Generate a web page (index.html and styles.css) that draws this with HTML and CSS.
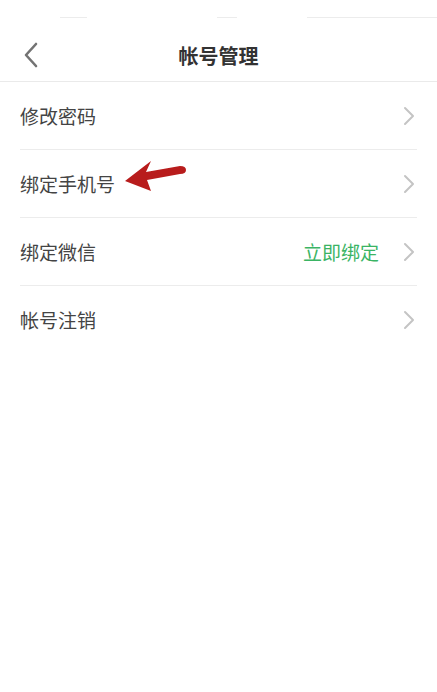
FILE: index.html
```html
<!DOCTYPE html>
<html lang="zh-CN">
<head>
  <meta charset="UTF-8" />
  <meta name="viewport" content="width=device-width, initial-scale=1.0" />
  <title>帐号管理</title>
  <link rel="stylesheet" href="styles.css">
</head>
<body>
  <div class="status">
    <span class="seg seg1"></span>
    <span class="seg seg2"></span>
    <span class="seg seg3"></span>
  </div>

  <div class="header">
    <svg class="back" width="16" height="26" viewBox="0 0 16 26">
      <path d="M13 2 L3 13 L13 24" fill="none" stroke="#737373" stroke-width="2.6" stroke-linecap="round" stroke-linejoin="round" />
    </svg>
    <h1>帐号管理</h1>
  </div>

  <div class="list">
    <div class="row">
      <span class="label">修改密码</span>
      <svg class="chev" width="12" height="20" viewBox="0 0 12 20"><path d="M2 2 L10 10 L2 18" fill="none" stroke="#c4c4c4" stroke-width="2" stroke-linecap="round" stroke-linejoin="round" /></svg>
    </div>
    <div class="row">
      <span class="label">绑定手机号</span>
      <!-- annotation arrow -->
      <svg class="arrow" width="70" height="36" viewBox="0 0 70 36">
        <path d="M0 24 L26 4 L21 15 L55 9 Q61 9 61 13 Q61 17 55 17 L22 23 L26 34 Z" fill="#b81c1c" />
      </svg>
      <svg class="chev" width="12" height="20" viewBox="0 0 12 20"><path d="M2 2 L10 10 L2 18" fill="none" stroke="#c4c4c4" stroke-width="2" stroke-linecap="round" stroke-linejoin="round" /></svg>
    </div>
    <div class="row">
      <span class="label">绑定微信</span>
      <span class="action">立即绑定</span>
      <svg class="chev" width="12" height="20" viewBox="0 0 12 20"><path d="M2 2 L10 10 L2 18" fill="none" stroke="#c4c4c4" stroke-width="2" stroke-linecap="round" stroke-linejoin="round" /></svg>
    </div>
    <div class="row last">
      <span class="label">帐号注销</span>
      <svg class="chev" width="12" height="20" viewBox="0 0 12 20"><path d="M2 2 L10 10 L2 18" fill="none" stroke="#c4c4c4" stroke-width="2" stroke-linecap="round" stroke-linejoin="round" /></svg>
    </div>
  </div>
</body>
</html>
```

FILE: styles.css
```css
body { margin: 0; background: #fff; font-family: "Noto Sans CJK SC", "Noto Sans", sans-serif; color: #444; }
.status { height: 30px; display: flex; align-items: flex-start; padding-top: 17px; box-sizing: border-box; }
.seg { display: block; height: 1px; background: #ececec; }
.seg1 { margin-left: 60px; width: 27px; }
.seg2 { margin-left: 130px; width: 20px; }
.seg3 { margin-left: 70px; flex: 1; }
.header { height: 51px; border-bottom: 1px solid #eaeaea; display: flex; align-items: center; justify-content: center; position: relative; }
.header h1 { margin: 0; font-size: 20px; font-weight: bold; color: #333; }
.back { position: absolute; left: 23px; top: 12px; }
.list { padding: 0 20px; }
.row { height: 67px; border-bottom: 1px solid #ececec; display: flex; align-items: center; position: relative; }
.row.last { border-bottom: none; }
.label { font-size: 19px; flex: 1; }
.action { font-size: 19px; color: #3ab464; margin-right: 24px; }
.chev { margin-right: 2px; }
.arrow { position: absolute; left: 105px; top: 7px; }
```
